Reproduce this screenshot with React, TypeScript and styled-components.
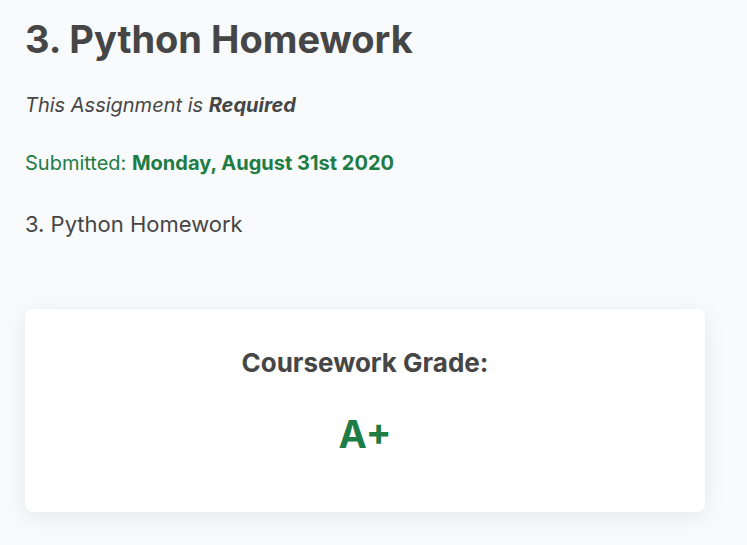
import React from "react";
import styled, { createGlobalStyle } from "styled-components";

const GlobalStyle = createGlobalStyle`
  html, body {
    margin: 0;
    padding: 0;
    background: #f9fafc;
  }
  body {
    font-family: Inter, "Noto Sans", sans-serif;
    color: #464646;
  }
`;

const Page = styled.main`
  padding: 16px 42px 32px 25px;
  display: flex;
  flex-direction: column;
`;

const Title = styled.h1`
  margin: 0;
  font-size: 38px;
  line-height: 46px;
  font-weight: 700;
  color: #464646;
`;

const Requirement = styled.p`
  margin: 29px 0 0;
  font-size: 20px;
  line-height: 28px;
  font-style: italic;
  color: #464646;
`;

const Submitted = styled.p`
  margin: 30px 0 0;
  font-size: 20px;
  line-height: 28px;
  color: #1e7d45;
`;

const Strong = styled.strong`
  font-weight: 700;
`;

const Description = styled.p`
  margin: 32px 0 0;
  font-size: 22px;
  line-height: 30px;
  color: #464646;
`;

const GradeCard = styled.section`
  margin-top: 70px;
  background: #ffffff;
  border-radius: 8px;
  box-shadow: 0 5px 22px rgba(0, 0, 0, 0.08);
  height: 203px;
  display: flex;
  flex-direction: column;
  align-items: center;
  padding-top: 38px;
  box-sizing: border-box;
`;

const GradeLabel = styled.h2`
  margin: 0;
  font-size: 26px;
  line-height: 32px;
  font-weight: 700;
  color: #464646;
`;

const GradeValue = styled.div`
  margin-top: 32px;
  font-size: 38px;
  line-height: 46px;
  font-weight: 700;
  color: #1e7d45;
`;

export default function App() {
  return (
    <>
      <GlobalStyle />
      <Page>
        <Title>3. Python Homework</Title>
        <Requirement>
          This Assignment is <Strong>Required</Strong>
        </Requirement>
        <Submitted>
          Submitted: <Strong>Monday, August 31st 2020</Strong>
        </Submitted>
        <Description>3. Python Homework</Description>
        <GradeCard>
          <GradeLabel>Coursework Grade:</GradeLabel>
          <GradeValue>A+</GradeValue>
        </GradeCard>
      </Page>
    </>
  );
}
